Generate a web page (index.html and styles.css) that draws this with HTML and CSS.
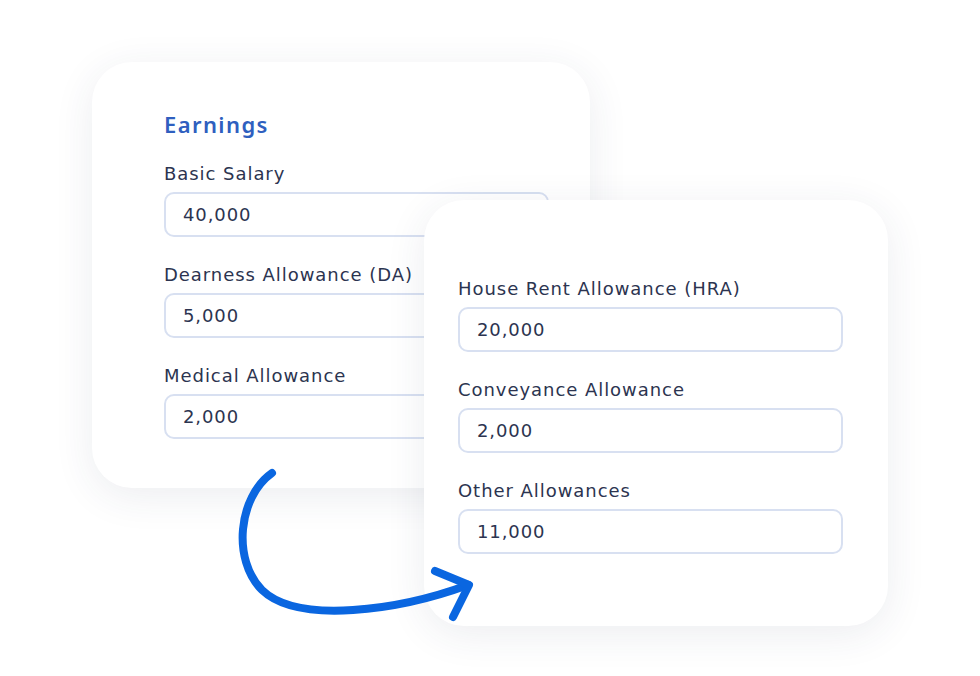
FILE: index.html
```html
<!DOCTYPE html>
<html lang="en">
<head>
<meta charset="utf-8">
<title>Earnings</title>
<link rel="stylesheet" href="styles.css">
</head>
<body>
<div class="stage">
  <section class="card card-main">
    <h2 class="title">Earnings</h2>
    <div class="field">
      <label class="label">Basic Salary</label>
      <div class="input">40,000</div>
    </div>
    <div class="field">
      <label class="label">Dearness Allowance (DA)</label>
      <div class="input">5,000</div>
    </div>
    <div class="field">
      <label class="label">Medical Allowance</label>
      <div class="input">2,000</div>
    </div>
  </section>
  <section class="card card-extra">
    <div class="field">
      <label class="label">House Rent Allowance (HRA)</label>
      <div class="input">20,000</div>
    </div>
    <div class="field">
      <label class="label">Conveyance Allowance</label>
      <div class="input">2,000</div>
    </div>
    <div class="field">
      <label class="label">Other Allowances</label>
      <div class="input">11,000</div>
    </div>
  </section>
  <svg class="arrow" width="980" height="676" viewBox="0 0 980 676" aria-hidden="true">
    <path d="M272 473 C 238 497 232 560 262 590 C 298 625 400 610 468 585" fill="none" stroke="#0a66e0" stroke-width="8" stroke-linecap="round"/>
    <path d="M435 571 L 469 585 L 453 617" fill="none" stroke="#0a66e0" stroke-width="8" stroke-linecap="round" stroke-linejoin="round"/>
  </svg>
</div>
</body>
</html>
```
FILE: styles.css
```css
* { box-sizing: border-box; }
html, body { margin: 0; padding: 0; background: #ffffff; }
body {
  font-family: "DejaVu Sans", "Noto Sans", sans-serif;
  color: #2c3450;
  width: 980px;
  height: 676px;
  overflow: hidden;
}
.stage {
  position: relative;
  width: 980px;
  height: 676px;
}
.card {
  position: absolute;
  background: #ffffff;
  border-radius: 40px;
  box-shadow: 0 8px 40px rgba(40, 50, 90, 0.09);
  display: flex;
  flex-direction: column;
}
.card-main {
  left: 92px;
  top: 62px;
  width: 498px;
  height: 426px;
  padding: 48px 0 0 72px;
}
.card-extra {
  left: 424px;
  top: 200px;
  width: 464px;
  height: 426px;
  padding: 78px 0 0 34px;
}
.title {
  margin: 0 0 25px 0;
  font-family: "Noto Sans", "DejaVu Sans", sans-serif;
  font-size: 22px;
  line-height: 28px;
  font-weight: 600;
  letter-spacing: 1.4px;
  color: #2f5fbf;
}
.field {
  display: flex;
  flex-direction: column;
  margin-bottom: 27px;
}
.label {
  font-size: 18px;
  line-height: 22px;
  letter-spacing: 0.95px;
  margin-bottom: 7px;
  color: #2c3450;
}
.input {
  width: 385px;
  height: 45px;
  border: 2px solid #d8e0f1;
  border-radius: 10px;
  padding-left: 17px;
  display: flex;
  align-items: center;
  font-size: 18px;
  letter-spacing: 0.9px;
  color: #2c3450;
  background: #ffffff;
}
.arrow {
  position: absolute;
  left: 0;
  top: 0;
  pointer-events: none;
}
```
